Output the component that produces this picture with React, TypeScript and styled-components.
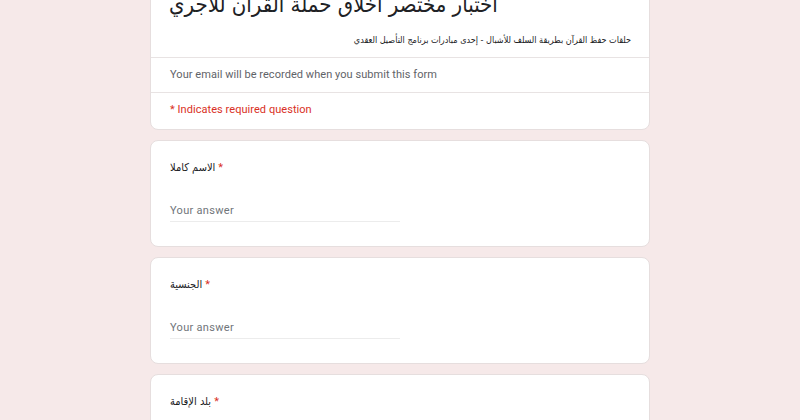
import React from "react";
import styled, { createGlobalStyle } from "styled-components";

const Global = createGlobalStyle`
  html, body { margin: 0; padding: 0; background: #f6e9e9; }
  body { font-family: Roboto, "DejaVu Sans", Arial, sans-serif; overflow: hidden; }
`;

const arabic = `"DejaVu Sans Condensed", "DejaVu Sans", Arial, sans-serif`;

const Page = styled.div`
  width: 500px;
  margin: -16px auto 0;
  display: flex;
  flex-direction: column;
  gap: 10px;
`;

const Card = styled.div`
  background: #fff;
  border: 1px solid #e6dede;
  border-radius: 8px;
  box-sizing: border-box;
`;

const HeaderTop = styled.div`
  padding: 0 18px;
  border-bottom: 1px solid #e8e3e3;
  height: 72px;
  display: flex;
  flex-direction: column;
`;

const Title = styled.h1`
  margin: 0;
  font-family: ${arabic};
  font-weight: 400;
  font-size: 22px;
  line-height: 40px;
  color: #202124;
`;

const Subtitle = styled.p`
  margin: 8px 0 0;
  direction: rtl;
  font-family: ${arabic};
  font-size: 9px;
  line-height: 14px;
  color: #202124;
`;

const InfoRow = styled.div<{ $red?: boolean; $last?: boolean }>`
  box-sizing: border-box;
  height: ${(p) => (p.$last ? "36px" : "35px")};
  padding: 0 19px ${(p) => (p.$last ? "3px" : "1px")};
  display: flex;
  align-items: center;
  font-size: 11px;
  letter-spacing: 0.05px;
  color: ${(p) => (p.$red ? "#d93025" : "#5f6368")};
  border-bottom: ${(p) => (p.$last ? "none" : "1px solid #e8e3e3")};
`;

const Question = styled(Card)`
  padding: 18px 19px 24px;
`;

const Label = styled.div`
  font-family: ${arabic};
  font-size: 11px;
  line-height: 18px;
  color: #202124;
`;

const Star = styled.span`
  font-family: Roboto, sans-serif;
  color: #d93025;
  margin-left: 3px;
`;

const Answer = styled.div`
  margin-top: 23px;
  width: 230px;
  height: 21px;
  display: flex;
  align-items: center;
  font-size: 11px;
  letter-spacing: 0.3px;
  color: #70757a;
  border-bottom: 1px solid #ececec;
`;

const questions = ["الاسم كاملا", "الجنسية", "بلد الإقامة"];

export default function App() {
  return (
    <>
      <Global />
      <Page>
        <Card>
          <HeaderTop>
            <Title>اختبار مختصر اخلاق حملة القران للاجري</Title>
            <Subtitle>حلقات حفظ القرآن بطريقة السلف للأشبال - إحدى مبادرات برنامج التأصيل العقدي</Subtitle>
          </HeaderTop>
          <InfoRow>Your email will be recorded when you submit this form</InfoRow>
          <InfoRow $red $last>* Indicates required question</InfoRow>
        </Card>
        {questions.map((q) => (
          <Question key={q}>
            <Label>
              {q}
              <Star>*</Star>
            </Label>
            <Answer>Your answer</Answer>
          </Question>
        ))}
      </Page>
    </>
  );
}
